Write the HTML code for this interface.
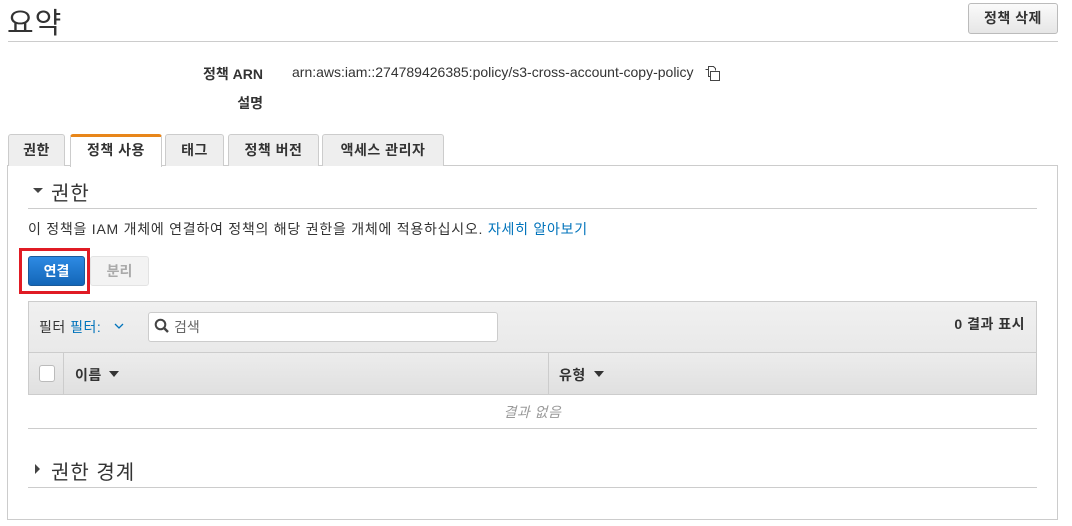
<!DOCTYPE html>
<html><head><meta charset="utf-8"><style>
*{box-sizing:border-box;margin:0;padding:0}
body{width:1072px;height:526px;background:#fff;font-family:"Liberation Sans","Noto Sans CJK KR",sans-serif;color:#333;font-size:14px;position:relative;overflow:hidden}
.a{position:absolute}
.tab{position:absolute;top:134px;height:32px;border:1px solid #ccc;border-bottom:none;background:#eee;border-radius:3px 3px 0 0;font-size:14px;font-weight:bold;text-align:center;line-height:30px;color:#333;letter-spacing:0.5px}
</style></head><body>
<div class="a" style="left:7px;top:0px;font-size:29px;color:#333;letter-spacing:1px">요약</div>
<div class="a" style="left:968px;top:3px;width:90px;height:31px;border:1px solid #bbb;border-radius:3px;background:linear-gradient(#fafafa,#e6e6e6);text-align:center;line-height:29px;font-size:14px;font-weight:bold;letter-spacing:0.5px">정책 삭제</div>
<div class="a" style="left:8px;top:41px;width:1050px;height:1px;background:#ccc"></div>
<div class="a" style="left:150px;top:64px;width:113px;text-align:right;font-weight:bold">정책 ARN</div>
<div class="a" style="left:292px;top:64px;color:#333">arn:aws:iam::274789426385:policy/s3-cross-account-copy-policy</div>
<svg class="a" style="left:704px;top:65px" width="17" height="17" viewBox="0 0 17 17"><path d="M1.5 4.5h3v-3h5l2 2v2M4.5 4.5v7h2" fill="none" stroke="#444"/><rect x="6.5" y="6.5" width="9" height="9" fill="#fff" stroke="#444"/></svg>
<div class="a" style="left:150px;top:93px;width:113px;text-align:right;font-weight:bold">설명</div>
<div class="a" style="left:7px;top:165px;width:1051px;height:355px;border:1px solid #ccc"></div>
<div class="tab" style="left:8px;width:57px">권한</div>
<div class="tab" style="left:70px;width:92px;background:#fff;height:33px;border-top:3px solid #e8861a;line-height:26px">정책 사용</div>
<div class="tab" style="left:165px;width:59px">태그</div>
<div class="tab" style="left:228px;width:91px">정책 버전</div>
<div class="tab" style="left:322px;width:122px">액세스 관리자</div>
<div class="a" style="left:33px;top:188px;width:0;height:0;border-left:5px solid transparent;border-right:5px solid transparent;border-top:5px solid #444"></div>
<div class="a" style="left:51px;top:177px;font-size:20px;letter-spacing:1px">권한</div>
<div class="a" style="left:28px;top:208px;width:1009px;height:1px;background:#ccc"></div>
<div class="a" style="left:28px;top:219px;font-size:14px;letter-spacing:0.75px">이 정책을 IAM 개체에 연결하여 정책의 해당 권한을 개체에 적용하십시오. <span style="color:#0073bb">자세히 알아보기</span></div>
<div class="a" style="left:19px;top:248px;width:71px;height:46px;border:3px solid #e01b24"></div>
<div class="a" style="left:28px;top:256px;width:57px;height:30px;border:1px solid #1a5a9a;border-radius:3px;background:linear-gradient(#2d8ae3,#1366b8);color:#fff;font-weight:bold;text-align:center;line-height:28px">연결</div>
<div class="a" style="left:90px;top:256px;width:59px;height:30px;border:1px solid #e3e3e3;border-radius:3px;background:#f3f3f3;color:#aaa;font-weight:bold;text-align:center;line-height:28px">분리</div>
<div class="a" style="left:28px;top:301px;width:1009px;height:94px;border:1px solid #ccc;background:linear-gradient(#f0f0f0,#e3e3e3)"></div>
<div class="a" style="left:28px;top:352px;width:1009px;height:43px;border:1px solid #ccc;background:linear-gradient(#ececec,#e0e0e0)"></div>
<div class="a" style="left:39px;top:317px;font-size:14px;letter-spacing:0.5px">필터 <span style="color:#0073bb">필터:</span></div>
<svg class="a" style="left:114px;top:323px" width="10" height="7" viewBox="0 0 10 7"><path d="M1 1l4 4 4-4" fill="none" stroke="#0073bb" stroke-width="1.3"/></svg>
<div class="a" style="left:148px;top:312px;width:350px;height:30px;border:1px solid #ccc;border-radius:3px;background:#fff"></div>
<svg class="a" style="left:154px;top:318px" width="16" height="16" viewBox="0 0 16 16"><circle cx="6.5" cy="6.5" r="4.8" fill="none" stroke="#444" stroke-width="2"/><path d="M10 10l4 4" stroke="#444" stroke-width="2.4"/></svg>
<div class="a" style="left:174px;top:317px;color:#666">검색</div>
<div class="a" style="left:900px;top:314px;width:125px;text-align:right;font-weight:bold;letter-spacing:0.5px">0 결과 표시</div>
<div class="a" style="left:39px;top:365px;width:16px;height:17px;border:1px solid #bbb;border-radius:3px;background:#fff"></div>
<div class="a" style="left:63px;top:353px;width:1px;height:41px;background:#ccc"></div>
<div class="a" style="left:548px;top:353px;width:1px;height:41px;background:#ccc"></div>
<div class="a" style="left:75px;top:365px;font-weight:bold;letter-spacing:0.5px">이름</div>
<div class="a" style="left:109px;top:371px;border-left:5px solid transparent;border-right:5px solid transparent;border-top:6px solid #333"></div>
<div class="a" style="left:559px;top:365px;font-weight:bold;letter-spacing:0.5px">유형</div>
<div class="a" style="left:594px;top:371px;border-left:5px solid transparent;border-right:5px solid transparent;border-top:6px solid #333"></div>
<div class="a" style="left:28px;top:402px;width:1009px;text-align:center;color:#999;font-style:italic;letter-spacing:0.5px">결과 없음</div>
<div class="a" style="left:28px;top:428px;width:1009px;height:1px;background:#ccc"></div>
<div class="a" style="left:35px;top:464px;width:0;height:0;border-top:5px solid transparent;border-bottom:5px solid transparent;border-left:5px solid #444"></div>
<div class="a" style="left:51px;top:456px;font-size:20px;letter-spacing:1px">권한 경계</div>
<div class="a" style="left:28px;top:487px;width:1009px;height:1px;background:#ccc"></div>
</body></html>
